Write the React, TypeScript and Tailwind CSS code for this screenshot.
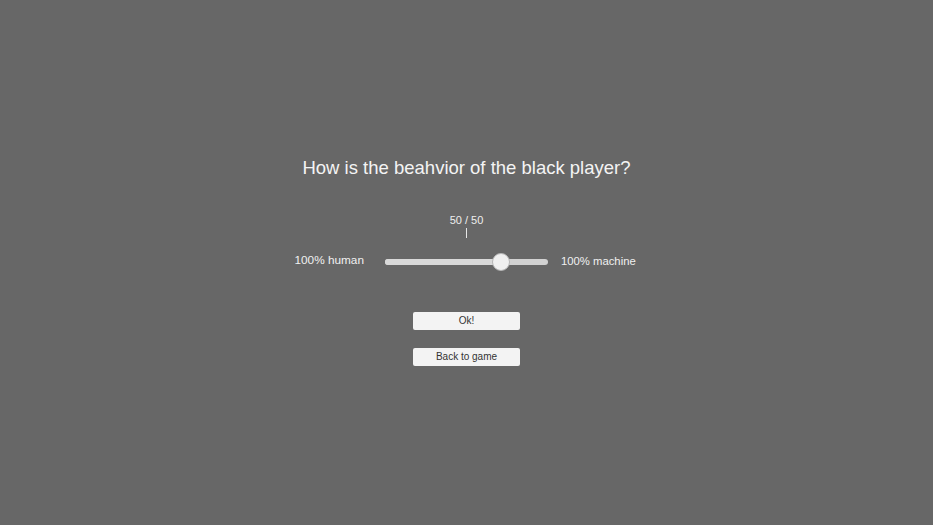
import React from 'react';

const font = { fontFamily: '"Liberation Sans", Arial, sans-serif' };

// Pantalla de pregunta sobre el comportamiento del jugador
export default function App() {
  const value = 50;
  const max = 50;

  return (
    <div className="w-[933px] h-[525px] bg-[#676767] flex flex-col items-center pt-[156px]" style={font}>
      <h1 className="h-[24px] leading-[24px] text-[18.5px] text-[#f4f4f4] whitespace-nowrap">
        How is the beahvior of the black player?
      </h1>

      <div className="mt-[33px] h-[14px] leading-[14px] text-[11px] text-[#eeeeee]">
        {value} / {max}
      </div>
      <div className="mt-[1px] w-px h-[10px] bg-[#e6e6e6]" />

      <div className="mt-[14px] h-[20px] flex items-center pr-[5px]">
        <span className="w-[70px] pb-[3px] text-right text-[11.8px] text-[#f0f0f0] leading-[17px] whitespace-nowrap">
          100% human
        </span>
        <div className="ml-[21px] relative w-[163px] h-[6px] rounded-full bg-[#d2d2d2]">
          <div className="absolute left-0 top-0 h-[6px] w-[116px] rounded-full bg-[#d9d9d9]" />
          <div className="absolute left-[107px] top-[-6px] w-[18px] h-[18px] rounded-full bg-[#f0f0f0] border border-[#b5b5b5]" />
        </div>
        <span className="ml-[13px] w-[73px] pb-[2px] text-left text-[11.3px] text-[#f0f0f0] leading-[17px] whitespace-nowrap">
          100% machine
        </span>
      </div>

      <button className="mt-[40px] w-[107px] h-[18px] bg-[#f3f3f3] rounded-[2px] text-[10px] text-[#333333] leading-[18px]">
        Ok!
      </button>
      <button className="mt-[18px] w-[107px] h-[18px] bg-[#f3f3f3] rounded-[2px] text-[10px] text-[#333333] leading-[18px]">
        Back to game
      </button>
    </div>
  );
}
